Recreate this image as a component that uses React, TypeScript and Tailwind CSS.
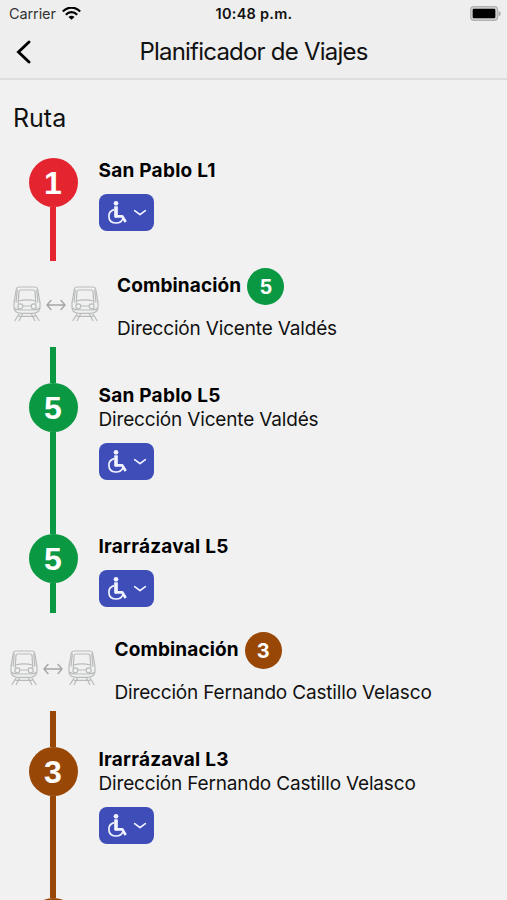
const INTER = "font-['Inter','Liberation_Sans',sans-serif]";

function Wifi() {
  return (
    <svg width="19" height="14" viewBox="0 0 57 42" fill="none" stroke="#000" strokeWidth="6.500" className="ml-[6px] shrink-0">
      <path d="M2.500 13.500C17 -2 40 -2 54.500 13.500" />
      <path d="M11.500 23C21 13 36 13 45.500 23" />
      <path d="M28.500 38.500L19.500 30C24.500 25 32.500 25 37.500 30Z" fill="#000" stroke="none" />
    </svg>
  );
}

function Battery() {
  return (
    <svg width="31" height="15" viewBox="0 0 93 45" className="shrink-0">
      <rect x="2" y="2" width="81" height="41" rx="10" fill="#d0d0d0" stroke="#b0b0b0" strokeWidth="3.500" />
      <rect x="8" y="8" width="68" height="29" rx="4" fill="#000" />
      <path d="M86 15c5 2 6 5 6 8s-1 6-6 8z" fill="#a8a8a8" />
    </svg>
  );
}

function AccessButton() {
  return (
    <button className="flex h-[37px] w-[55px] items-center rounded-[8px] bg-[#3f4db8] pl-[8px]">
      <svg width="22" height="25" viewBox="0 0 66 75" fill="none" stroke="#f1f4ff" className="shrink-0">
        <circle cx="27" cy="10" r="7" fill="#f1f4ff" stroke="none" />
        <path d="M27 19V52" strokeWidth="11" />
        <path d="M24 49H46L56 66" strokeWidth="8" strokeLinejoin="round" />
        <path d="M21 29C0 35 0 67 25 69C38 70 44 65 48 56" strokeWidth="5" />
      </svg>
      <svg width="14" height="8" viewBox="0 0 42 24" fill="none" stroke="#f1f4ff" strokeWidth="5" strokeLinecap="round" strokeLinejoin="round" className="ml-[4.500px] shrink-0">
        <path d="M5 5L21 17L37 5" />
      </svg>
    </button>
  );
}

function Train() {
  return (
    <svg width="28" height="36" viewBox="0 0 84 108" fill="none" stroke="#b9bbbb" strokeWidth="3.600" className="shrink-0">
      <path d="M18 3H66Q73 3 74 9L81 50V62Q81 75 71 79Q65 82 58 82H26Q18 82 12 79Q3 75 3 62V50L10 9Q11 3 18 3Z" />
      <path d="M24 12H60Q65 12 66 17L68 45Q42 38 16 45L18 17Q19 12 24 12Z" />
      <path d="M13 10L9 50M71 10L75 50M16 45V53M68 45V53M30 60H54M4 66Q10 72 22 72H62Q74 72 80 66" />
      <circle cx="22" cy="61" r="7.500" />
      <circle cx="62" cy="61" r="7.500" />
      <path d="M19 83L5 105M29 83L18 105M55 83L66 105M65 83L79 105M17 91H67" />
    </svg>
  );
}

function TransferIcon() {
  return (
    <div className="flex items-center">
      <Train />
      <svg width="20" height="14" viewBox="0 0 60 42" fill="none" stroke="#a3a5a6" strokeWidth="4" className="mx-[5px] mt-[2px] shrink-0">
        <path d="M3 21H57M16 6L3 21L16 36M44 6L57 21L44 36" />
      </svg>
      <Train />
    </div>
  );
}

function LineBadge({ line, color }: { line: string; color: string }) {
  return (
    <div className={`flex size-[49px] shrink-0 items-center justify-center rounded-full font-['Liberation_Sans',sans-serif] text-[32px] leading-none font-bold text-white ${color}`}>
      {line}
    </div>
  );
}

type StationProps = {
  line: string;
  color: string;
  name: string;
  direction?: string;
  before: string;
  row: string;
  textTop: string;
};

function Station({ line, color, name, direction, before, row, textTop }: StationProps) {
  return (
    <section className={`flex pl-[28.500px] ${row}`}>
      <div className="flex w-[49px] shrink-0 flex-col items-center">
        <div className={`w-[6px] shrink-0 ${color} ${before}`} />
        <LineBadge line={line} color={color} />
        <div className={`w-[6px] flex-1 ${color}`} />
      </div>
      <div className={`ml-[21px] flex flex-col items-start whitespace-nowrap ${textTop}`}>
        <h2 className="text-[19px] leading-[24px] font-bold tracking-[0.250px] text-black">{name}</h2>
        {direction && <p className="text-[19px] leading-[24px] tracking-[-0.170px] text-[#111]">{direction}</p>}
        <div className="mt-[11px]">
          <AccessButton />
        </div>
      </div>
    </section>
  );
}

type TransferProps = { line: string; color: string; direction: string; row: string };

function Transfer({ line, color, direction, row }: TransferProps) {
  return (
    <section className={`flex items-start whitespace-nowrap ${row}`}>
      <div className="pt-[25px]">
        <TransferIcon />
      </div>
      <div className="ml-[18.500px] pt-[7px]">
        <div className="flex h-[37px] items-center">
          <h2 className="text-[19px] font-bold tracking-[0.130px] text-black">Combinación</h2>
          <span className={`ml-[6px] flex size-[37px] items-center justify-center rounded-full text-[20px] font-bold text-white ${color}`}>{line}</span>
        </div>
        <p className="mt-[12px] text-[19px] leading-[24px] tracking-[-0.170px] text-[#111]">{direction}</p>
      </div>
    </section>
  );
}

export default function App() {
  return (
    <main className={`h-[900px] w-[507px] overflow-hidden bg-[#f1f1f1] text-black ${INTER}`}>
      <header className="h-[80px] border-b-2 border-[#dedede] bg-[#eeeeee]">
        <div className="grid h-[27px] grid-cols-3 items-center pr-[6px] pl-[9px] whitespace-nowrap">
          <div className="flex items-center">
            <span className="text-[14.500px] tracking-[-0.100px] text-[#333]">Carrier</span>
            <Wifi />
          </div>
          <span className="pr-[2px] text-center text-[14.500px] font-semibold tracking-[0.250px] text-[#111]">10:48 p.m.</span>
          <div className="flex justify-end">
            <Battery />
          </div>
        </div>
        <div className="flex h-[49px] items-center">
          <button className="ml-[16px] w-[30px]" aria-label="Atrás">
            <svg width="16" height="24" viewBox="0 0 16 24" fill="none" stroke="#000" strokeWidth="2.900" strokeLinecap="round">
              <path d="M13 2L2.500 12L13 22" />
            </svg>
          </button>
          <h1 className="flex-1 pr-[46px] text-center text-[24px] tracking-[-0.780px] text-[#111]">Planificador de Viajes</h1>
        </div>
      </header>
      <h2 className="h-[78px] pt-[22px] pl-[13px] text-[25px] leading-[32px] text-[#111]">Ruta</h2>
      <Station line="1" color="bg-[#e4252f]" name="San Pablo L1" before="h-0" row="h-[103px]" textTop="pt-px" />
      <Transfer line="5" color="bg-[#0b9842]" direction="Dirección Vicente Valdés" row="h-[86px] pl-[12.500px]" />
      <Station line="5" color="bg-[#0b9842]" name="San Pablo L5" direction="Dirección Vicente Valdés" before="h-[36px]" row="h-[151px]" textTop="pt-[37px]" />
      <Station line="5" color="bg-[#0b9842]" name="Irarrázaval L5" before="h-[36px]" row="h-[115px]" textTop="pt-[37px]" />
      <Transfer line="3" color="bg-[#984706]" direction="Dirección Fernando Castillo Velasco" row="h-[98px] pt-[12px] pl-[10px]" />
      <Station line="3" color="bg-[#984706]" name="Irarrázaval L3" direction="Dirección Fernando Castillo Velasco" before="h-[36px]" row="h-[151px]" textTop="pt-[37px]" />
      <div className="ml-[28.500px] flex w-[49px] flex-col items-center">
        <div className="h-[36px] w-[6px] bg-[#984706]" />
        <div className="size-[49px] shrink-0 rounded-full bg-[#984706]" />
      </div>
    </main>
  );
}
